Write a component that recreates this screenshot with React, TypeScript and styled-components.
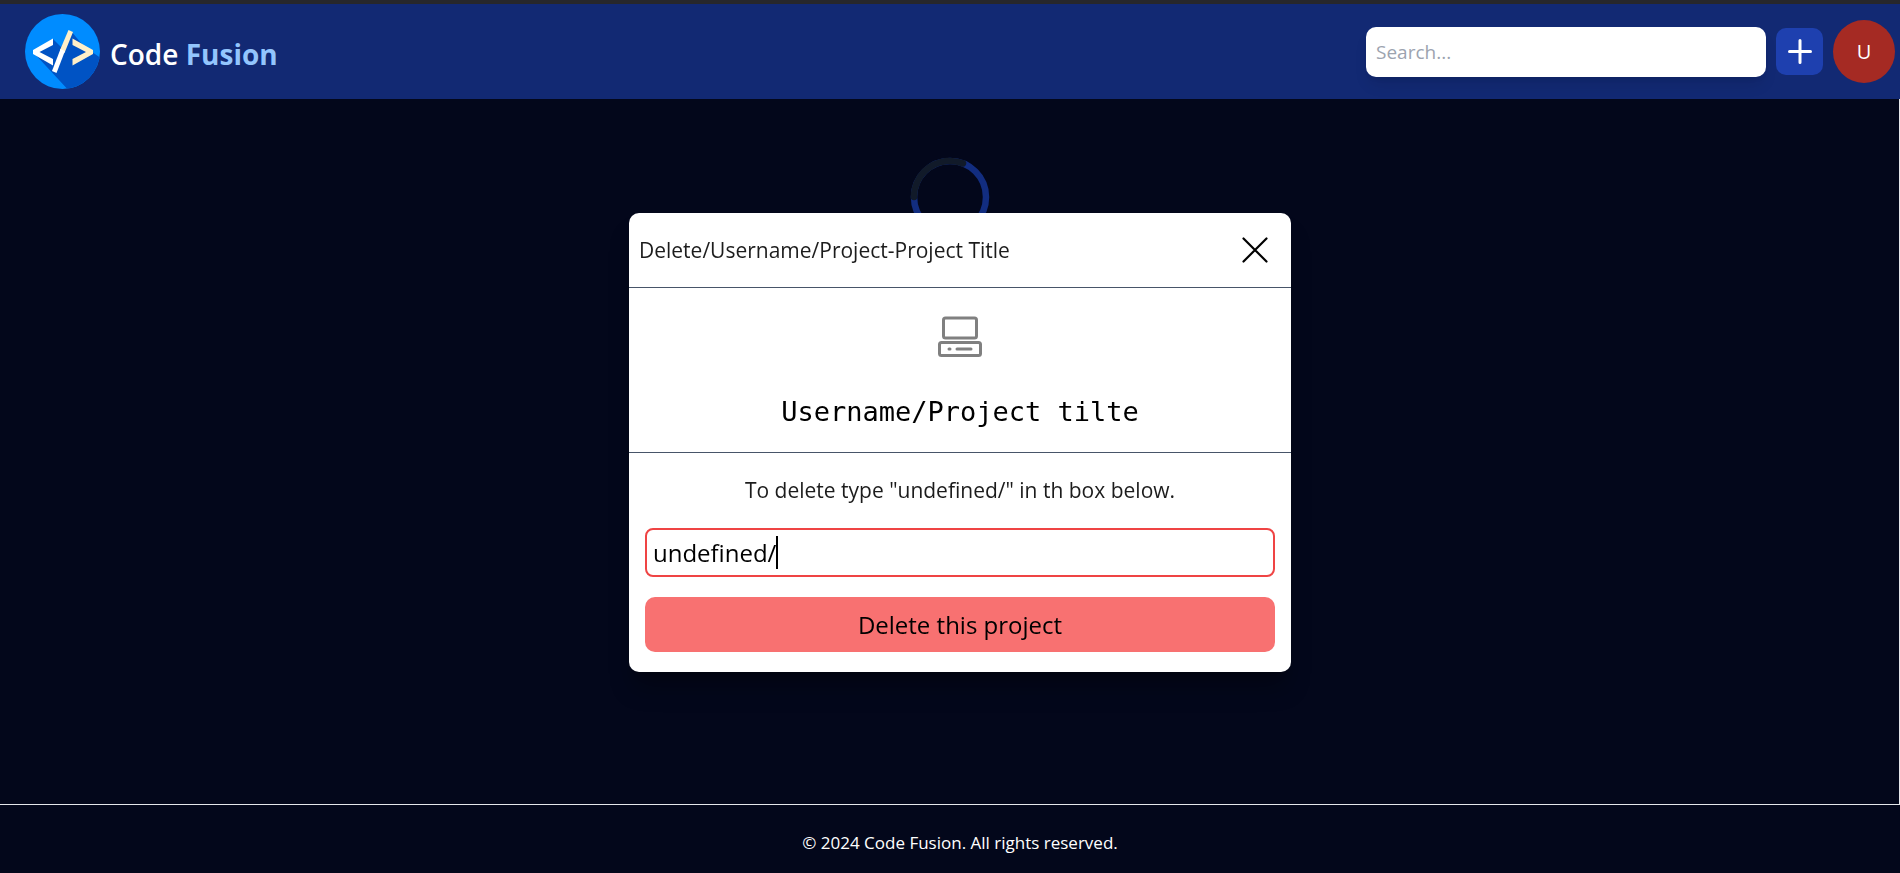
import React, { useLayoutEffect, useRef, useState } from "react";
import styled, { createGlobalStyle } from "styled-components";

const sans = `"Segoe UI", "Open Sans", "Noto Sans", sans-serif`;

const GlobalStyle = createGlobalStyle`
  *, *::before, *::after { box-sizing: border-box; }
  body { margin: 0; background: #03071b; font-family: ${sans}; }
  button, input { font: inherit; color: inherit; margin: 0; }
`;

const Page = styled.div`
  min-height: 100vh;
  display: flex;
  flex-direction: column;
`;

const Header = styled.header`
  display: flex;
  align-items: center;
  justify-content: space-between;
  height: 99px;
  padding: 0 5px 0 25px;
  border-top: 4px solid #27272b;
  background: #122973;
`;

const Brand = styled.a`
  display: flex;
  align-items: center;
  gap: 10px;
  color: #fff;
  font-size: 28px;
  line-height: 36px;
  font-weight: 500;
  text-decoration: none;
`;

const BrandName = styled.span`
  padding-top: 4px;
  font-weight: 600;
`;

const BrandAccent = styled.span`
  color: #93c5fd;
  font-weight: 700;
`;

const Tools = styled.div`
  display: flex;
  align-items: center;
  gap: 10px;
`;

const Search = styled.input`
  width: 400px;
  height: 50px;
  padding: 0 10px;
  border: 0;
  border-radius: 10px;
  background: #fff;
  color: #111;
  font-size: 19px;
  box-shadow: 0 10px 15px -3px rgba(0, 0, 0, 0.1), 0 4px 6px -4px rgba(0, 0, 0, 0.1);
  &::placeholder { color: #9ca3af; opacity: 1; }
`;

const AddButton = styled.button`
  display: grid;
  place-items: center;
  width: 47px;
  height: 47px;
  padding: 0;
  border: 0;
  border-radius: 10px;
  background: #1e40af;
  color: #fff;
`;

const Avatar = styled.button`
  width: 62px;
  height: 63px;
  padding: 0;
  border: 0;
  border-radius: 50%;
  background: #a52a23;
  color: #fff;
  font-size: 20px;
`;

const Main = styled.main`
  flex: 1;
  display: flex;
  justify-content: center;
  padding-top: 58px;
  border-right: 1px solid #e5e7eb;
`;

const Footer = styled.footer`
  height: 69px;
  padding: 8px 0 0 20px;
  border-top: 1px solid #e5e7eb;
  display: grid;
  place-items: center;
  color: #fff;
  font-size: 17px;
  line-height: 28px;
`;

const Overlay = styled.div`
  position: fixed;
  inset: 0;
  display: grid;
  place-items: center;
  padding: 12px 0 0 20px;
`;

const Dialog = styled.section`
  width: 662px;
  max-width: 100%;
  border-radius: 10px;
  background: #fff;
  color: #000;
  box-shadow: 0 20px 25px -5px rgba(0, 0, 0, 0.3), 0 8px 10px -6px rgba(0, 0, 0, 0.3);
`;

const DialogHeader = styled.div`
  display: flex;
  align-items: center;
  justify-content: space-between;
  height: 75px;
  padding: 0 20px 0 10px;
  border-bottom: 1px solid #475569;
`;

const DialogTitle = styled.h2`
  margin: 0;
  color: #1c1c1c;
  font-size: 21px;
  line-height: 32px;
  font-weight: 400;
`;

const CloseButton = styled.button`
  display: grid;
  place-items: center;
  width: 32px;
  height: 32px;
  padding: 0;
  border: 0;
  background: transparent;
`;

const Summary = styled.div`
  display: flex;
  flex-direction: column;
  align-items: center;
  justify-content: space-between;
  height: 165px;
  padding: 28px 0 20px;
  border-bottom: 1px solid #475569;
`;

const ProjectName = styled.p`
  margin: 0;
  font-family: Consolas, "DejaVu Sans Mono", monospace;
  font-size: 27px;
  line-height: 40px;
`;

const Form = styled.form`
  display: flex;
  flex-direction: column;
  gap: 20px;
  padding: 20px 16px;
`;

const Prompt = styled.label`
  color: #1c1c1c;
  text-align: center;
  font-size: 21px;
  line-height: 35px;
`;

const Field = styled.div`
  position: relative;
  display: flex;
`;

const Confirm = styled.input`
  flex: 1;
  min-width: 0;
  height: 49px;
  padding: 0 6px;
  border: 2px solid #ef4444;
  border-radius: 8px;
  outline: 0;
  background: #fff;
  font-size: 24px;
  caret-color: transparent;
`;

const Caret = styled.span`
  position: absolute;
  top: 8px;
  width: 2px;
  height: 33px;
  background: #000;
  pointer-events: none;
`;

const DeleteButton = styled.button`
  height: 55px;
  padding: 0;
  border: 0;
  border-radius: 10px;
  background: #f87171;
  font-size: 24px;
`;

const Logo = () => (
  <svg width="75" height="75" viewBox="0 0 75 75" aria-hidden="true">
    <defs>
      <clipPath id="disc"><circle cx="37.5" cy="37.5" r="37.5" /></clipPath>
    </defs>
    <g clipPath="url(#disc)">
      <rect width="75" height="75" fill="#008cff" />
      <path d="M8 38 L28 25 L36 33 L46 17 L56 29 L67 38 L80 47 L80 80 L47 80 Z" fill="#0053c4" />
    </g>
    <path d="M28 24.500V31L14.500 38L28 45V51.500L8 40V36Z" fill="#fff" />
    <path d="M47.500 24.500V31L61 38L47.500 45V51.500L68 40V36Z" fill="#fff0c8" />
    <path d="M43.500 16L48 18L39.500 39L35 36Z" fill="#fff0c8" />
    <path d="M35.500 35L40 37L31.500 59L27 57Z" fill="#fff" />
  </svg>
);

const Spinner = () => (
  <svg width="80" height="80" viewBox="0 0 80 80" fill="none" strokeWidth="6.500" role="img" aria-label="Loading">
    <circle cx="40" cy="40" r="36" stroke="#122d80" />
    <path d="M4 40A36 36 0 0 1 53 6.400" stroke="#111a29" strokeLinecap="round" />
  </svg>
);

const Computer = () => (
  <svg width="44" height="42" viewBox="0 0 44 42" fill="none" stroke="#808080" strokeWidth="3" strokeLinecap="round" aria-hidden="true">
    <rect x="5.500" y="2" width="33" height="20" rx="2" />
    <rect x="1.500" y="26.500" width="41" height="13" rx="2" />
    <path d="M11 33H12M19 33H33" />
  </svg>
);

function ConfirmField() {
  const [value, setValue] = useState("undefined/");
  const [caretX, setCaretX] = useState(0);
  const input = useRef<HTMLInputElement>(null);

  useLayoutEffect(() => {
    const context = document.createElement("canvas").getContext("2d");
    if (!input.current || !context) return;
    const style = getComputedStyle(input.current);
    context.font = `${style.fontWeight} ${style.fontSize} ${style.fontFamily}`;
    setCaretX(Math.round(context.measureText(value).width) + 8);
  }, [value]);

  return (
    <Field>
      <Confirm ref={input} id="confirm" autoComplete="off" value={value} onChange={(e) => setValue(e.target.value)} />
      <Caret style={{ left: caretX }} />
    </Field>
  );
}

export default function App() {
  return (
    <Page>
      <GlobalStyle />
      <Header>
        <Brand href="#">
          <Logo />
          <BrandName>Code <BrandAccent>Fusion</BrandAccent></BrandName>
        </Brand>
        <Tools>
          <Search type="search" placeholder="Search..." aria-label="Search" />
          <AddButton type="button" aria-label="New project">
            <svg width="24" height="25" viewBox="0 0 24 25" stroke="#fff" strokeWidth="3" strokeLinecap="round" aria-hidden="true">
              <path d="M12 1.500V23.500M1.500 12.500H22.500" />
            </svg>
          </AddButton>
          <Avatar type="button">U</Avatar>
        </Tools>
      </Header>
      <Main><Spinner /></Main>
      <Footer>© 2024 Code Fusion. All rights reserved.</Footer>
      <Overlay>
        <Dialog role="dialog" aria-labelledby="dialog-title">
          <DialogHeader>
            <DialogTitle id="dialog-title">Delete/Username/Project-Project Title</DialogTitle>
            <CloseButton type="button" aria-label="Close">
              <svg width="26" height="26" viewBox="0 0 26 26" stroke="#000" strokeWidth="2.200" strokeLinecap="round" aria-hidden="true">
                <path d="M1.500 1.500L24.500 24.500M24.500 1.500L1.500 24.500" />
              </svg>
            </CloseButton>
          </DialogHeader>
          <Summary>
            <Computer />
            <ProjectName>Username/Project tilte</ProjectName>
          </Summary>
          <Form onSubmit={(e) => e.preventDefault()}>
            <Prompt htmlFor="confirm">To delete type "undefined/" in th box below.</Prompt>
            <ConfirmField />
            <DeleteButton type="submit">Delete this project</DeleteButton>
          </Form>
        </Dialog>
      </Overlay>
    </Page>
  );
}
